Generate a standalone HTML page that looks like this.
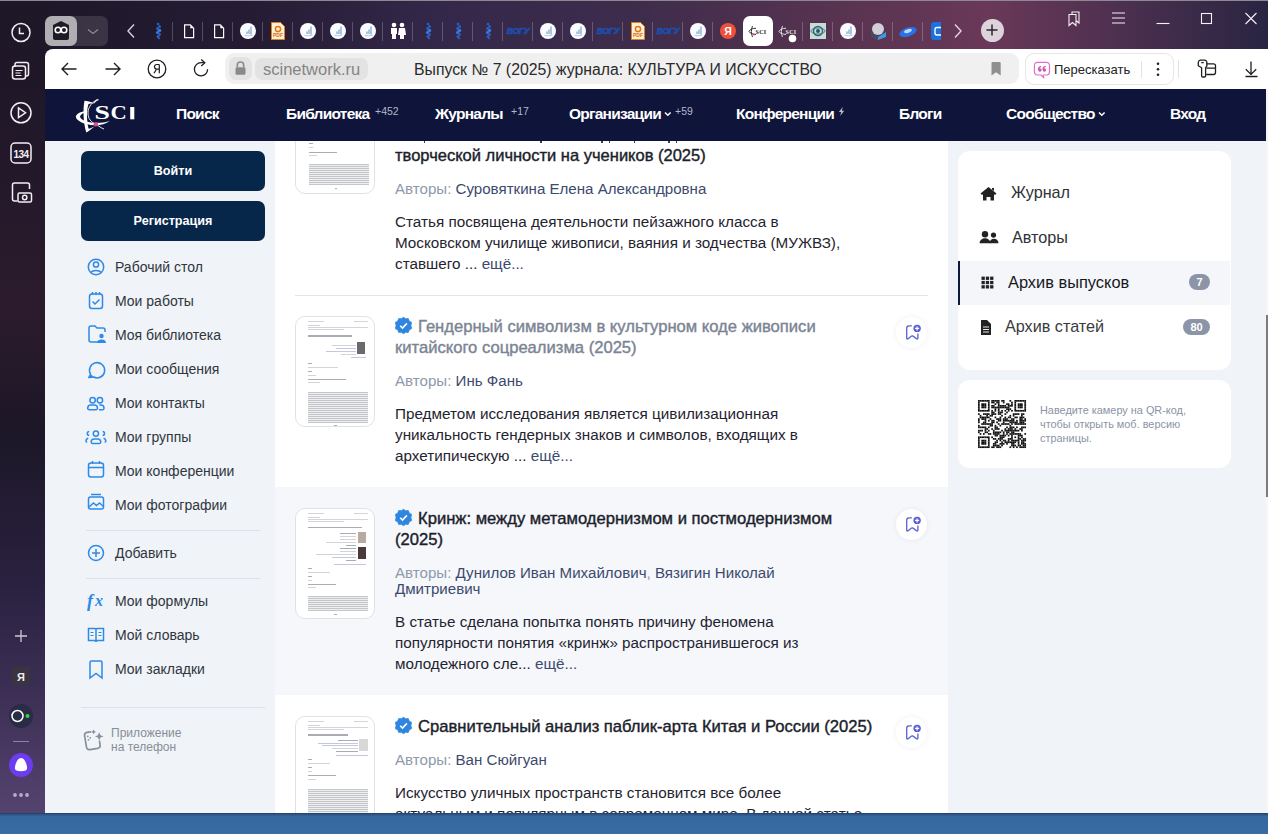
<!DOCTYPE html><html><head><meta charset="utf-8"><style>
*{box-sizing:border-box;margin:0;padding:0}
html,body{width:1268px;height:834px;overflow:hidden;font-family:"Liberation Sans",sans-serif;background:#1c1526}
.abs{position:absolute}
svg{position:absolute;overflow:visible}
#frame{position:absolute;left:0;top:0;width:1268px;height:813px;
 background:linear-gradient(90deg,#1c1727 0%,#251c34 20%,#34284a 35%,#3e2c4c 50%,#563350 65%,#6a3858 78%,#4e3050 88%,#282542 100%);}
#topline{position:absolute;left:0;top:0;width:1268px;height:1px;background:#8e8894}
#lside{position:absolute;left:0;top:0;width:45px;height:813px;
 background:linear-gradient(180deg,#1d1727 0%,#22182a 20%,#2c1b2c 38%,#1c1727 53%,#2a2140 72%,#3f3158 87%,#55436f 100%)}
#toolbar{position:absolute;left:45px;top:49px;width:1223px;height:40px;background:#fff;border-top-left-radius:8px}
#page{position:absolute;left:45px;top:89px;width:1223px;height:724px;background:#f0f3f7;overflow:hidden}
#nav{position:absolute;left:0;top:0;width:1223px;height:52px;background:#0e143a}
#taskbar{position:absolute;left:0;top:813px;width:1268px;height:21px;background:linear-gradient(180deg,#213d63 0,#2d5585 1.5px,#3668a0 3.5px,#3a6ba3 100%)}
.sep{position:absolute;top:22px;width:1px;height:19px;background:rgba(255,255,255,.22)}
.navi{position:absolute;top:0;height:52px;line-height:50px;color:#fff;font-weight:bold;font-size:15.5px;letter-spacing:-0.75px;white-space:nowrap}
.sup{position:absolute;color:#b4b8c8;font-size:10.5px;white-space:nowrap}
.btn{position:absolute;left:36px;width:184px;height:40px;border-radius:7px;background:#06264a;color:#fff;font-weight:bold;font-size:12.6px;text-align:center;line-height:40px}
.mi{position:absolute;left:70px;font-size:14px;color:#2f3640;white-space:nowrap;line-height:16px}
.div{position:absolute;height:1px;background:#dde1e7}
.t{position:absolute;white-space:nowrap}
</style></head><body>
<div id="frame"></div><div id="lside"></div><div id="topline"></div>
<svg style="left:0;top:0" width="45" height="813">
<g fill="none" stroke="#f2eef5" stroke-width="1.5">
<circle cx="21" cy="32.5" r="9"/><path d="M19.5 27.5v6h4.5"/>
<rect x="12.5" y="66" width="13" height="13" rx="2.5"/><path d="M15 67 v-2.5 a2 2 0 0 1 2-2 h9.5 a2 2 0 0 1 2 2 v9.5 a2 2 0 0 1 -2 2 h-1"/>
<path d="M15.5 70.5h7M15.5 73h5M15.5 75.5h6" stroke-width="1.2"/>
<circle cx="21" cy="112.8" r="10"/><path d="M18.5 108v9.5l7-4.75z"/>
<rect x="11" y="143" width="20" height="20" rx="4"/>
<path d="M12.5 189 v-4 a2 2 0 0 1 2-2 h13 a2 2 0 0 1 2 2 v4 M12.5 189 v10 a2 2 0 0 0 2 2 h3"/>
<rect x="18" y="193" width="13.5" height="9" rx="1.5"/><circle cx="24.7" cy="197.5" r="2.2"/>
<path d="M15 636h12M21 630v12" stroke-width="1.3" stroke="#cfc6d8"/>
<path d="M13 741.5h16" stroke="#8d7fa6" stroke-width="1"/>
</g>
<text x="21" y="157.5" fill="#f2eef5" font-family="Liberation Sans" font-weight="bold" font-size="10" letter-spacing="-0.5" text-anchor="middle">134</text>
<rect x="12" y="667" width="18" height="18" fill="#3a3440"/>
<text x="21" y="680.5" fill="#eee" font-family="Liberation Sans" font-weight="bold" font-size="11" text-anchor="middle">Я</text>
<circle cx="21" cy="716" r="12" fill="#2a2b45"/>
<circle cx="17.5" cy="716" r="5.5" fill="none" stroke="#fff" stroke-width="1.5"/>
<circle cx="27.5" cy="716" r="2" fill="#33d44a"/>
<circle cx="21" cy="765" r="12" fill="#6b3cf0"/>
<path d="M21 758 C17 758 14.5 766 15 769 C15.5 772 26.5 772 27 769 C27.5 766 25 758 21 758z" fill="#fff"/>
<circle cx="15" cy="795" r="1.9" fill="#b7a9cf"/><circle cx="21" cy="795" r="1.9" fill="#b7a9cf"/><circle cx="27" cy="795" r="1.9" fill="#b7a9cf"/>
</svg>
<div class="abs" style="left:45px;top:16px;width:63px;height:30px;border-radius:7px;background:rgba(255,255,255,.12)"></div>
<div class="abs" style="left:45px;top:16px;width:32px;height:30px;border-radius:7px;background:#b0adb3"></div>
<svg style="left:45px;top:16px" width="63" height="30">
<path d="M8 9 L16 5 L24 9 V22 a2 2 0 0 1 -2 2 H10 a2 2 0 0 1 -2-2z" fill="#1f1a28"/>
<circle cx="13" cy="14" r="2.8" fill="none" stroke="#fff" stroke-width="1.6"/><circle cx="19" cy="14" r="2.8" fill="none" stroke="#fff" stroke-width="1.6"/>
<path d="M43 13.5l5 4 5-4" fill="none" stroke="#8f8a99" stroke-width="1.3"/>
</svg>
<svg style="left:120px;top:16px" width="20" height="30"><path d="M14 8.5l-6 6.5 6 6.5" fill="none" stroke="#d8d2de" stroke-width="1.4"/></svg>

<svg style="left:154px;top:22px" width="10" height="18"><g fill="#2a5fc0"><circle cx="4" cy="2" r="1.3"/><circle cx="5.5" cy="4.5" r="1.5"/><circle cx="3.5" cy="6.5" r="1.4"/><circle cx="5.5" cy="8.5" r="1.8" fill="#3a78d8"/><circle cx="3.5" cy="10.5" r="1.6" fill="#3a78d8"/><circle cx="5.5" cy="12.5" r="1.4"/><circle cx="4" cy="14.5" r="1.5"/><circle cx="5" cy="16.3" r="1.1"/></g></svg>
<div class="sep" style="left:172px"></div>
<svg style="left:183.5px;top:24px" width="12" height="15"><path d="M0.6 0.9 H6.3 L9.6 4.2 V13.6 H0.6z" fill="none" stroke="#fff" stroke-width="1.2"/><path d="M6.3 0.9 V4.2 H9.6z" fill="#fff"/></svg>
<div class="sep" style="left:202px"></div>
<svg style="left:213.5px;top:24px" width="12" height="15"><path d="M0.6 0.9 H6.3 L9.6 4.2 V13.6 H0.6z" fill="none" stroke="#fff" stroke-width="1.2"/><path d="M6.3 0.9 V4.2 H9.6z" fill="#fff"/></svg>
<div class="sep" style="left:232px"></div>
<svg style="left:240px;top:23px" width="16" height="16"><circle cx="8" cy="8" r="8" fill="#fbfcff"/><path d="M7 11V8.5M9 11V6.5M11 11.5V3.5" stroke="#6f98cc" stroke-width="1.1"/><path d="M4.5 12.3 Q8.5 13.5 12.5 12" stroke="#aac2e0" fill="none" stroke-width="0.9"/></svg>
<div class="sep" style="left:262px"></div>
<svg style="left:271px;top:22px" width="14" height="18"><path d="M0.5 0.5H9.5L13.5 4.5V17.5H0.5z" fill="#fdf0d8" stroke="#e0821a"/><text x="7" y="15" font-size="5" fill="#e06a10" text-anchor="middle" font-family="Liberation Sans" font-weight="bold">PDF</text><circle cx="7" cy="7" r="2.6" fill="none" stroke="#e07a10" stroke-width="1.5"/></svg>
<div class="sep" style="left:292px"></div>
<svg style="left:300px;top:23px" width="16" height="16"><circle cx="8" cy="8" r="8" fill="#fbfcff"/><path d="M7 11V8.5M9 11V6.5M11 11.5V3.5" stroke="#6f98cc" stroke-width="1.1"/><path d="M4.5 12.3 Q8.5 13.5 12.5 12" stroke="#aac2e0" fill="none" stroke-width="0.9"/></svg>
<div class="sep" style="left:322px"></div>
<svg style="left:330px;top:23px" width="16" height="16"><circle cx="8" cy="8" r="8" fill="#fbfcff"/><path d="M7 11V8.5M9 11V6.5M11 11.5V3.5" stroke="#6f98cc" stroke-width="1.1"/><path d="M4.5 12.3 Q8.5 13.5 12.5 12" stroke="#aac2e0" fill="none" stroke-width="0.9"/></svg>
<div class="sep" style="left:352px"></div>
<svg style="left:360px;top:23px" width="16" height="16"><circle cx="8" cy="8" r="8" fill="#fbfcff"/><path d="M7 11V8.5M9 11V6.5M11 11.5V3.5" stroke="#6f98cc" stroke-width="1.1"/><path d="M4.5 12.3 Q8.5 13.5 12.5 12" stroke="#aac2e0" fill="none" stroke-width="0.9"/></svg>
<div class="sep" style="left:382px"></div>
<svg style="left:389px;top:22px" width="18" height="18"><circle cx="5" cy="3" r="2.3" fill="#fff"/><circle cx="13" cy="3" r="2.3" fill="#fff"/><path d="M2 6h6v6H7v5H3v-5H2z M10 6h6l1 7h-2v4h-4v-4H9z" fill="#fff"/></svg>
<div class="sep" style="left:412px"></div>
<svg style="left:424px;top:22px" width="10" height="18"><g fill="#2a5fc0"><circle cx="4" cy="2" r="1.3"/><circle cx="5.5" cy="4.5" r="1.5"/><circle cx="3.5" cy="6.5" r="1.4"/><circle cx="5.5" cy="8.5" r="1.8" fill="#3a78d8"/><circle cx="3.5" cy="10.5" r="1.6" fill="#3a78d8"/><circle cx="5.5" cy="12.5" r="1.4"/><circle cx="4" cy="14.5" r="1.5"/><circle cx="5" cy="16.3" r="1.1"/></g></svg>
<div class="sep" style="left:442px"></div>
<svg style="left:454px;top:22px" width="10" height="18"><g fill="#2a5fc0"><circle cx="4" cy="2" r="1.3"/><circle cx="5.5" cy="4.5" r="1.5"/><circle cx="3.5" cy="6.5" r="1.4"/><circle cx="5.5" cy="8.5" r="1.8" fill="#3a78d8"/><circle cx="3.5" cy="10.5" r="1.6" fill="#3a78d8"/><circle cx="5.5" cy="12.5" r="1.4"/><circle cx="4" cy="14.5" r="1.5"/><circle cx="5" cy="16.3" r="1.1"/></g></svg>
<div class="sep" style="left:472px"></div>
<svg style="left:484px;top:22px" width="10" height="18"><g fill="#2a5fc0"><circle cx="4" cy="2" r="1.3"/><circle cx="5.5" cy="4.5" r="1.5"/><circle cx="3.5" cy="6.5" r="1.4"/><circle cx="5.5" cy="8.5" r="1.8" fill="#3a78d8"/><circle cx="3.5" cy="10.5" r="1.6" fill="#3a78d8"/><circle cx="5.5" cy="12.5" r="1.4"/><circle cx="4" cy="14.5" r="1.5"/><circle cx="5" cy="16.3" r="1.1"/></g></svg>
<div class="sep" style="left:502px"></div>
<svg style="left:507px;top:26px" width="22" height="10"><text x="11" y="7.6" font-size="8.6" fill="#1c4fae" stroke="#1c4fae" stroke-width="0.6" text-anchor="middle" font-family="Liberation Sans" font-weight="bold" font-style="italic" letter-spacing="-0.3">ВОГУ</text></svg>
<div class="sep" style="left:532px"></div>
<svg style="left:540px;top:23px" width="16" height="16"><circle cx="8" cy="8" r="8" fill="#fbfcff"/><path d="M7 11V8.5M9 11V6.5M11 11.5V3.5" stroke="#6f98cc" stroke-width="1.1"/><path d="M4.5 12.3 Q8.5 13.5 12.5 12" stroke="#aac2e0" fill="none" stroke-width="0.9"/></svg>
<div class="sep" style="left:562px"></div>
<svg style="left:570px;top:23px" width="16" height="16"><circle cx="8" cy="8" r="8" fill="#fbfcff"/><path d="M7 11V8.5M9 11V6.5M11 11.5V3.5" stroke="#6f98cc" stroke-width="1.1"/><path d="M4.5 12.3 Q8.5 13.5 12.5 12" stroke="#aac2e0" fill="none" stroke-width="0.9"/></svg>
<div class="sep" style="left:592px"></div>
<svg style="left:597px;top:26px" width="22" height="10"><text x="11" y="7.6" font-size="8.6" fill="#1c4fae" stroke="#1c4fae" stroke-width="0.6" text-anchor="middle" font-family="Liberation Sans" font-weight="bold" font-style="italic" letter-spacing="-0.3">ВОГУ</text></svg>
<div class="sep" style="left:622px"></div>
<svg style="left:631px;top:22px" width="14" height="18"><path d="M0.5 0.5H9.5L13.5 4.5V17.5H0.5z" fill="#fdf0d8" stroke="#e0821a"/><text x="7" y="15" font-size="5" fill="#e06a10" text-anchor="middle" font-family="Liberation Sans" font-weight="bold">PDF</text><circle cx="7" cy="7" r="2.6" fill="none" stroke="#e07a10" stroke-width="1.5"/></svg>
<div class="sep" style="left:652px"></div>
<svg style="left:657px;top:26px" width="22" height="10"><text x="11" y="7.6" font-size="8.6" fill="#1c4fae" stroke="#1c4fae" stroke-width="0.6" text-anchor="middle" font-family="Liberation Sans" font-weight="bold" font-style="italic" letter-spacing="-0.3">ВОГУ</text></svg>
<div class="sep" style="left:682px"></div>
<svg style="left:690px;top:23px" width="16" height="16"><circle cx="8" cy="8" r="8" fill="#fbfcff"/><path d="M7 11V8.5M9 11V6.5M11 11.5V3.5" stroke="#6f98cc" stroke-width="1.1"/><path d="M4.5 12.3 Q8.5 13.5 12.5 12" stroke="#aac2e0" fill="none" stroke-width="0.9"/></svg>
<div class="sep" style="left:712px"></div>
<svg style="left:720px;top:23px" width="16" height="16"><circle cx="8" cy="8" r="8" fill="#f0503a"/><text x="8" y="12" font-size="10.5" fill="#fff" text-anchor="middle" font-family="Liberation Sans" font-weight="bold">Я</text></svg>
<div class="abs" style="left:743px;top:16px;width:30px;height:30px;border-radius:7px;background:#fff"></div><svg style="left:748px;top:24px" width="20" height="14"><path d="M1 7.5 C2 5, 5 4.3, 8 4.3 M1 7.5 C2 9.5, 5 10.3, 8 10.5 M4.5 2 C3 5, 3 10, 4.5 13" fill="none" stroke="#333" stroke-width="1"/><circle cx="6" cy="10.5" r="0.9" fill="#d04080"/><text x="13" y="9.5" font-size="6" fill="#222" text-anchor="middle" font-family="Liberation Serif" font-weight="bold" letter-spacing="0.3">SCI</text></svg>
<svg style="left:778px;top:24px" width="20" height="18"><path d="M1 7.5 C2 5, 5 4.3, 8 4.3 M1 7.5 C2 9.5, 5 10.3, 8 10.5 M4.5 2 C3 5, 3 10, 4.5 13" fill="none" stroke="#ddd" stroke-width="1"/><text x="13" y="9.5" font-size="6" fill="#e8e8e8" text-anchor="middle" font-family="Liberation Serif" font-weight="bold" letter-spacing="0.3">SCI</text><circle cx="14.5" cy="14.5" r="3.8" fill="#fff"/></svg>
<div class="sep" style="left:802px"></div>
<svg style="left:810px;top:23px" width="16" height="16"><rect x="0" y="0" width="16" height="16" fill="#c8dcd8"/><circle cx="8" cy="8" r="4.5" fill="none" stroke="#2a6a70" stroke-width="1.5"/><circle cx="8" cy="8" r="2" fill="#2a5a60"/><ellipse cx="8" cy="8" rx="7" ry="3" fill="none" stroke="#406a80" stroke-width=".8"/></svg>
<div class="sep" style="left:832px"></div>
<svg style="left:840px;top:23px" width="16" height="16"><circle cx="8" cy="8" r="8" fill="#fbfcff"/><path d="M7 11V8.5M9 11V6.5M11 11.5V3.5" stroke="#6f98cc" stroke-width="1.1"/><path d="M4.5 12.3 Q8.5 13.5 12.5 12" stroke="#aac2e0" fill="none" stroke-width="0.9"/></svg>
<div class="sep" style="left:862px"></div>
<svg style="left:869px;top:22px" width="18" height="18"><circle cx="9" cy="7" r="6" fill="#d0d0d8"/><path d="M2 10 L9 15 L17 10 L17 15 L9 18 L2 14z" fill="#3a9ae0"/><path d="M2 10 L9 15 L9 18 L2 14z" fill="#444a55"/></svg>
<div class="sep" style="left:892px"></div>
<svg style="left:899px;top:24px" width="18" height="14"><ellipse cx="9" cy="8" rx="9" ry="4.5" transform="rotate(-18 9 8)" fill="#2a70e8"/><ellipse cx="9" cy="7" rx="4" ry="1.8" transform="rotate(-18 9 7)" fill="#bcd8ff"/></svg>
<div class="sep" style="left:922px"></div>
<div class="abs" style="left:931px;top:22px;width:10px;height:18px;overflow:hidden"><svg style="left:0;top:0;overflow:hidden" width="10" height="18"><rect x="0" y="0" width="14" height="18" rx="3" fill="#1a72e0"/><path d="M10 5.5 H6 a2 2 0 0 0 -2 2 V11 a2 2 0 0 0 2 2 H10" fill="none" stroke="#fff" stroke-width="1.4"/></svg></div>
<svg style="left:950px;top:16px" width="20" height="30"><path d="M5 8.5l6 6.5-6 6.5" fill="none" stroke="#e0d8e0" stroke-width="1.4"/></svg>
<div class="abs" style="left:980.5px;top:18.5px;width:23px;height:23px;border-radius:50%;background:#ddd3da"></div>
<svg style="left:980px;top:18px" width="24" height="24"><path d="M12 6.5v11M6.5 12h11" stroke="#2d2430" stroke-width="1.5"/></svg>
<svg style="left:1060px;top:5px" width="208" height="30" >
<g fill="none" stroke="#f4f0f4" stroke-width="1.1">
<path d="M9 9.5 h7 v11 l-3.5-3 -3.5 3z M12 9.5 v-2.5 h7 v11 l-3 -2.5"/>
<path d="M52 8h13M52 13h13M52 18h13"/>
<path d="M96.5 18.5h13"/>
<rect x="141.5" y="8.5" width="10" height="10"/>
<path d="M185.5 8 l11 11 M196.5 8 l-11 11"/>
</g></svg>

<div id="toolbar"></div>
<svg style="left:0;top:49px" width="1268" height="40">
<g fill="none" stroke="#1f1f1f" stroke-width="1.4">
<path d="M76.5 20h-14.5M68 14l-6 6 6 6"/>
<path d="M105.5 20h14.5M114 14l6 6-6 6"/>
<circle cx="157" cy="20" r="8.8" stroke-width="1.3"/>
<path d="M207.6 20.3 A6.6 6.6 0 1 1 201 13.7 H203.8" stroke-width="1.3"/><path d="M201.3 10.6 L204.8 13.8 L201.3 17" stroke-width="1.3"/>
</g>
<path d="M159.3 15.5 V24.3 M159.3 15.5 H156.8 a2.3 2.3 0 0 0 0 4.6 H159.3 M156.5 20.1 L154 24.3" fill="none" stroke="#1f1f1f" stroke-width="1.2"/>
</svg>
<div class="abs" style="left:225px;top:53px;width:794px;height:31px;border-radius:9px;background:#f0f0f0"></div>
<div class="abs" style="left:229px;top:57px;width:23px;height:23px;border-radius:7px;background:#e3e3e3"></div>
<svg style="left:229px;top:57px" width="23" height="23"><path d="M8.3 10.5v-2.3a3.2 3.2 0 0 1 6.4 0v2.3" fill="none" stroke="#8a8a8a" stroke-width="1.6"/><rect x="6.5" y="10.3" width="10" height="7.5" rx="1.5" fill="#8a8a8a"/></svg>
<div class="abs" style="left:255px;top:58px;width:113px;height:22px;border-radius:7px;background:#e3e3e3"></div>
<div class="t" style="left:263px;top:59px;font-size:16.5px;line-height:20px;color:#858585">scinetwork.ru</div>
<div class="t" id="ttl" style="left:414px;top:59.5px;font-size:15.8px;line-height:20px;color:#2a2a2a">Выпуск № 7 (2025) журнала: КУЛЬТУРА И ИСКУССТВО</div>
<svg style="left:988px;top:60px" width="16" height="18"><path d="M4.7 2 h6.8 a1.2 1.2 0 0 1 1.2 1.2 V15.6 l-4.6-3.4 -4.6 3.4 V3.2 a1.2 1.2 0 0 1 1.2-1.2z" fill="#8f8f8f"/></svg>
<div class="abs" style="left:1025px;top:53px;width:149px;height:32px;border-radius:9px;background:#fff;border:1px solid #e6e6e6"></div>
<svg style="left:1033px;top:60px" width="18" height="20"><path d="M4.4 2.3 H13.5 a3 3 0 0 1 3 3 V12 a3 3 0 0 1 -3 3 H10.8 L10.2 15 L10.8 17.8 L8 15 H4.4 a3 3 0 0 1 -3-3 V5.3 a3 3 0 0 1 3-3z" fill="none" stroke="#e070c8" stroke-width="1.2" stroke-linejoin="round"/>
<g fill="#d050b8"><circle cx="6.9" cy="10" r="1.7"/><circle cx="11.4" cy="10" r="1.7"/></g>
<path d="M5.4 9.6 Q5.6 6.7 8.2 6.3 M9.9 9.6 Q10.1 6.7 12.7 6.3" fill="none" stroke="#d050b8" stroke-width="1.3"/></svg>
<div class="t" style="left:1054px;top:60.5px;font-size:13px;line-height:18px;color:#222">Пересказать</div>
<div class="abs" style="left:1141px;top:61px;width:1px;height:17px;background:#e2e2e2"></div>
<svg style="left:1150px;top:58px" width="16" height="22"><circle cx="8" cy="5.8" r="1.3" fill="#222"/><circle cx="8" cy="11.3" r="1.3" fill="#222"/><circle cx="8" cy="16.8" r="1.3" fill="#222"/></svg>
<div class="abs" style="left:1178px;top:60px;width:1px;height:18px;background:#e2e2e2"></div>
<svg style="left:1196px;top:58px" width="24" height="24"><g fill="none" stroke="#1f1f1f" stroke-width="1.3" stroke-linejoin="round"><path d="M2.3 4.5 a2.3 2.3 0 0 1 2.3-2.3 h4 a2.3 2.3 0 0 1 2.3 2.3 v3.3 l-1.3 2 V17.8 a1.2 1.2 0 0 1 -1.2 1.2 h-1.6 a1.2 1.2 0 0 1 -1.2-1.2 V9.8 L2.3 7.8z"/><path d="M10.3 5.8 h7.2 a2 2 0 0 1 2 2 v6.7 a2 2 0 0 1 -2 2 h-7.2 M10.3 10.2 h9.2"/><path d="M5.3 4.6 h2.4"/></g></svg>
<svg style="left:1240px;top:58px" width="22" height="24"><g fill="none" stroke="#1f1f1f" stroke-width="1.3"><path d="M11 3.5v13.5M5.8 11.2L11 16.4l5.2-5.2M5.5 18.5h12"/></g></svg>

<div id="page">
<div id="nav">
<svg style="left:31px;top:9px" width="62" height="38"><g transform="translate(-76 -98)">
<path d="M75.8 116.6 C77 112.5, 83 111, 88 111.3 C84 112.5, 80.5 114.5, 80 116.8 C80.5 119.5, 86 122, 94 123 C100 123.2, 106 122.5, 110 120.8 C106 124, 100 125.5, 94 125.3 C85 125, 76 121, 75.8 116.6 Z" fill="#fff"/>
<path d="M84.5 100.8 C83 108, 83 122, 86.3 132.6 C89 131, 92 128.5, 94.5 126.5 C91.5 128, 89 129, 88.5 128.5 C86.5 121, 86.5 110, 88.5 104 C90 103.5, 92 103.5, 94 103.2 C91 102, 87 101, 84.5 100.8 Z" fill="#fff"/>
<g fill="none" stroke="#e6e6ee">
<path d="M97.7 99.3 C92 102, 88 107, 88 113 C88 119, 91 122, 95.9 124.3 C99 126, 101 128, 104 129" stroke-width="1"/>
<path d="M93.6 103 C95 101.5, 97 100, 98.5 99.5" stroke-width="1.3"/>
</g>
<circle cx="95.9" cy="124.3" r="2.2" fill="#e04a8e"/>
<text font-family="Liberation Serif" font-weight="bold" font-size="18.5" fill="#fff" transform="translate(95.1 119.3) scale(1.5 1)" x="-0.4" y="0">S</text>
<text font-family="Liberation Serif" font-weight="bold" font-size="18.5" fill="#fff" transform="translate(111.1 119.3) scale(1.22 1)" x="-0.5" y="0">C</text>
<rect x="130.2" y="107" width="4.1" height="12.3" fill="#fff"/>
</g></svg>
<div class="navi" style="left:131px">Поиск</div>
<div class="navi" style="left:241px">Библиотека</div>
<div class="sup" style="left:330px;top:16px">+452</div>
<div class="navi" style="left:390px">Журналы</div>
<div class="sup" style="left:466px;top:16px">+17</div>
<div class="navi" style="left:524px">Организации</div>
<div class="sup" style="left:630px;top:16px">+59</div>
<div class="navi" style="left:691px">Конференции</div>
<div class="navi" style="left:854px">Блоги</div>
<div class="navi" style="left:961px">Сообщество</div>
<div class="navi" style="left:1125px">Вход</div>
<svg style="left:619px;top:22px" width="8" height="6"><path d="M1 1.5l2.8 2.8 2.8-2.8" fill="none" stroke="#fff" stroke-width="1.5"/></svg>
<svg style="left:1053px;top:22px" width="8" height="6"><path d="M1 1.5l2.8 2.8 2.8-2.8" fill="none" stroke="#fff" stroke-width="1.5"/></svg>
<svg style="left:793px;top:18px" width="7" height="9"><path d="M4.8 0 L0.8 5 H3.2 L2.2 9 L6.2 3.8 H3.8 L4.8 0z" fill="#b8bcc8"/></svg>
</div>
<div class="abs" style="left:0;top:52px;width:230px;height:672px;background:#f0f3f7"></div>
<div class="btn" style="top:62px">Войти</div>
<div class="btn" style="top:112px">Регистрация</div>
<div class="mi" style="top:170px">Рабочий стол</div>
<div class="mi" style="top:204px">Мои работы</div>
<div class="mi" style="top:238px">Моя библиотека</div>
<div class="mi" style="top:272px">Мои сообщения</div>
<div class="mi" style="top:306px">Мои контакты</div>
<div class="mi" style="top:340px">Мои группы</div>
<div class="mi" style="top:374px">Мои конференции</div>
<div class="mi" style="top:408px">Мои фотографии</div>
<div class="div" style="left:41px;width:174px;top:441px"></div>
<div class="mi" style="top:456px">Добавить</div>
<div class="div" style="left:41px;width:174px;top:489px"></div>
<div class="mi" style="top:504px">Мои формулы</div>
<div class="mi" style="top:538px">Мой словарь</div>
<div class="mi" style="top:572px">Мои закладки</div>
<div class="div" style="left:36px;width:184px;top:618px"></div>
<div class="t" style="left:66px;top:638.3px;font-size:12px;line-height:13.5px;color:#878e98">Приложение<br>на телефон</div>
<svg style="left:0;top:0" width="230" height="724"><g fill="none" stroke="#2d8ae8" stroke-width="1.5">
<circle cx="51" cy="178" r="7.7"/><circle cx="51" cy="175.5" r="2.6"/><path d="M45.5 183.5 a7 5 0 0 1 11 0"/>
<rect x="44.5" y="205" width="13" height="14.5" rx="2.5"/><path d="M47.5 203v3M51 203v3M54.5 203v3M47.5 212.5l2.5 2.5 4.5-4.5"/>
<path d="M55 253 H46 a2 2 0 0 1-2-2 V239 a2 2 0 0 1 2-2 h4 l2 2 h6 a2 2 0 0 1 2 2 v2"/>
<path d="M45.6 285.2 A7.6 7.6 0 1 1 48.6 288 L43.8 288.6 Z" stroke-linejoin="round"/>
<circle cx="47.6" cy="311.3" r="2.7"/><circle cx="54.9" cy="311.3" r="2.7"/><path d="M44.3 320.8 h6.6 a1.6 1.6 0 0 0 1.6-1.6 a3.2 3.2 0 0 0 -3.2-3.2 h-3.4 a3.2 3.2 0 0 0 -3.2 3.2 a1.6 1.6 0 0 0 1.6 1.6z M54.3 316 h1.5 a3.2 3.2 0 0 1 3.2 3.2 a1.6 1.6 0 0 1 -1.6 1.6 h-3.4"/>
<circle cx="50.9" cy="344.6" r="2.6"/><path d="M47.8 354.6 h6.4 a1.6 1.6 0 0 0 1.6-1.6 a3 3 0 0 0 -3-3 h-3.6 a3 3 0 0 0 -3 3 a1.6 1.6 0 0 0 1.6 1.6z M44.2 342.6 a1.9 1.9 0 0 0 0 3.8 M57.6 342.6 a1.9 1.9 0 0 1 0 3.8 M43.2 349.2 a2.8 2.8 0 0 0 -2.2 2.7 a1.2 1.2 0 0 0 1.2 1.2 M58.6 349.2 a2.8 2.8 0 0 1 2.2 2.7 a1.2 1.2 0 0 1 -1.2 1.2"/>
<rect x="43.5" y="374" width="15" height="14" rx="2.5"/><path d="M43.5 378.5h15M47.5 372v3M54.5 372v3"/>
<rect x="43.5" y="408" width="15" height="12" rx="2"/><path d="M46 405.5h10"/><path d="M44 418 l4.5-4 3 2.5 3-2.5 4 3.5"/>
<circle cx="51" cy="464" r="7.5"/><path d="M51 460v8M47 464h8"/>
<path d="M43.5 539.5 H50 a1 1 0 0 1 1 1 V553 a1.5 1.5 0 0 0 -1.5-1.5 H43.5z M58.5 539.5 H52 a1 1 0 0 0 -1 1 V553 a1.5 1.5 0 0 1 1.5-1.5 H58.5z"/><path d="M45.5 543.5h3M45.5 546.5h3M53.5 543.5h3M53.5 546.5h3" stroke-width="1.2"/>
<path d="M45 573.5 a1.5 1.5 0 0 1 1.5-1.5 h9 a1.5 1.5 0 0 1 1.5 1.5 V589 l-6-4.5 -6 4.5z"/>
</g>
<path d="M44 242 a1.5 1.5 0 0 1 0 0" fill="#2d8ae8"/>
<circle cx="56.5" cy="247" r="2.2" fill="#2d8ae8"/><path d="M52 254 a4.5 3.5 0 0 1 9 0z" fill="#2d8ae8"/>
<path d="M46 285.5 l-2 3 l4.5-1" fill="#2d8ae8"/>
<text x="42" y="518" font-family="Liberation Serif" font-style="italic" font-weight="bold" font-size="18" fill="#2d8ae8">f</text>
<text x="50" y="517" font-family="Liberation Serif" font-style="italic" font-weight="bold" font-size="16" fill="#2d8ae8">x</text>
<path d="M45.5 642.8 L42 643.4 a3 3 0 0 0 -2.4 3.4 l1.9 11.4 a3 3 0 0 0 3.4 2.4 l7.8-1.3 a3 3 0 0 0 2.4-3.4 l-0.6-3.6" fill="none" stroke="#8a9099" stroke-width="1.7" stroke-linecap="round"/>
<circle cx="42.8" cy="647.3" r="0.9" fill="#8a9099"/><circle cx="45.3" cy="648.8" r="0.9" fill="#8a9099"/><circle cx="43.5" cy="650.8" r="0.9" fill="#8a9099"/>
<path d="M54.2 643.2 l1.3 3 3 1.2 -3 1.2 -1.3 3 -1.3-3 -3-1.2 3-1.2z M48.6 640.5 l.8 1.6 1.6.8-1.6.8-.8 1.6-.8-1.6-1.6-.8 1.6-.8z" fill="#8a9099"/>
</svg>
<div class="abs" style="left:230px;top:52px;width:673px;height:672px;background:#fff"></div>
<div class="abs" style="left:230px;top:398px;width:673px;height:208px;background:#f5f7fb"></div>
<div class="div" style="left:250px;width:633px;top:206px;background:#e1e4ea"></div>
<div class="abs" style="left:250px;top:52px;width:80px;height:54px;overflow:hidden"><div class="abs" style="left:0px;top:-21px;width:80px;height:74px;border:1px solid #dfe2e6;border-radius:10px;background:#fff;overflow:hidden"><div class="abs" style="left:13px;top:22px;width:4px;height:1px;background:#a9acb2"></div><div class="abs" style="left:13px;top:26px;width:4px;height:1px;background:#d2d4d8"></div><div class="abs" style="left:13px;top:31px;width:28px;height:1px;background:#a9acb2"></div><div class="abs" style="left:13px;top:34px;width:8px;height:1px;background:#d2d4d8"></div><div class="abs" style="left:13px;top:43px;width:60px;height:21px;background:repeating-linear-gradient(180deg,#c4c6ca 0 1px,#eceef0 1px 2px)"></div><div class="abs" style="left:39px;top:67px;width:2px;height:1px;background:#a9acb2"></div></div></div>
<div class="abs" style="left:250px;top:227px;width:80px;height:111px;border:1px solid #dfe2e6;border-radius:10px;background:#fff;overflow:hidden"><div class="abs" style="left:12px;top:4px;width:16px;height:1px;background:#d2d4d8"></div><div class="abs" style="left:58px;top:4px;width:14px;height:1px;background:#d2d4d8"></div><div class="abs" style="left:12px;top:8px;width:12px;height:1px;background:#d2d4d8"></div><div class="abs" style="left:12px;top:10px;width:60px;height:1px;background:#d2d4d8"></div><div class="abs" style="left:12px;top:12px;width:36px;height:1px;background:#d2d4d8"></div><div class="abs" style="left:12px;top:18px;width:44px;height:2px;background:#a9acb2"></div><div class="abs" style="left:36px;top:28px;width:24px;height:1px;background:#d2d4d8"></div><div class="abs" style="left:40px;top:31px;width:20px;height:1px;background:#c3c8e0"></div><div class="abs" style="left:30px;top:34px;width:30px;height:1px;background:#c3c8e0"></div><div class="abs" style="left:45px;top:37px;width:15px;height:1px;background:#d2d4d8"></div><div class="abs" style="left:61px;top:25px;width:8px;height:12px;background:#6a6a6a"></div><div class="abs" style="left:55px;top:40px;width:15px;height:1px;background:#c3c8e0"></div><div class="abs" style="left:12px;top:46px;width:4px;height:1px;background:#a9acb2"></div><div class="abs" style="left:12px;top:50px;width:30px;height:1px;background:#d2d4d8"></div><div class="abs" style="left:12px;top:54px;width:4px;height:1px;background:#a9acb2"></div><div class="abs" style="left:12px;top:58px;width:8px;height:1px;background:#d2d4d8"></div><div class="abs" style="left:12px;top:62px;width:38px;height:1px;background:#a9acb2"></div><div class="abs" style="left:12px;top:65px;width:12px;height:1px;background:#d2d4d8"></div><div class="abs" style="left:12px;top:75px;width:60px;height:31px;background:repeating-linear-gradient(180deg,#c4c6ca 0 1px,#eceef0 1px 2px)"></div><div class="abs" style="left:38px;top:108px;width:3px;height:1px;background:#a9acb2"></div></div>
<div class="abs" style="left:250px;top:419px;width:80px;height:111px;border:1px solid #dfe2e6;border-radius:10px;background:#fff;overflow:hidden"><div class="abs" style="left:12px;top:4px;width:16px;height:1px;background:#d2d4d8"></div><div class="abs" style="left:58px;top:4px;width:14px;height:1px;background:#d2d4d8"></div><div class="abs" style="left:12px;top:8px;width:12px;height:1px;background:#d2d4d8"></div><div class="abs" style="left:12px;top:10px;width:60px;height:1px;background:#d2d4d8"></div><div class="abs" style="left:12px;top:12px;width:36px;height:1px;background:#d2d4d8"></div><div class="abs" style="left:12px;top:18px;width:54px;height:1px;background:#a9acb2"></div><div class="abs" style="left:44px;top:24px;width:16px;height:1px;background:#a9acb2"></div><div class="abs" style="left:44px;top:27px;width:16px;height:1px;background:#d2d4d8"></div><div class="abs" style="left:44px;top:30px;width:16px;height:1px;background:#d2d4d8"></div><div class="abs" style="left:30px;top:33px;width:30px;height:1px;background:#d2d4d8"></div><div class="abs" style="left:50px;top:36px;width:10px;height:1px;background:#a9acb2"></div><div class="abs" style="left:62px;top:23px;width:8px;height:11px;background:#b8aaa0"></div><div class="abs" style="left:44px;top:39px;width:16px;height:1px;background:#a9acb2"></div><div class="abs" style="left:44px;top:42px;width:16px;height:1px;background:#d2d4d8"></div><div class="abs" style="left:20px;top:45px;width:40px;height:1px;background:#d2d4d8"></div><div class="abs" style="left:36px;top:48px;width:24px;height:1px;background:#c3c8e0"></div><div class="abs" style="left:50px;top:51px;width:10px;height:1px;background:#a9acb2"></div><div class="abs" style="left:62px;top:38px;width:8px;height:12px;background:#4a3a38"></div><div class="abs" style="left:38px;top:55px;width:32px;height:1px;background:#c3c8e0"></div><div class="abs" style="left:12px;top:59px;width:4px;height:1px;background:#a9acb2"></div><div class="abs" style="left:12px;top:63px;width:22px;height:1px;background:#d2d4d8"></div><div class="abs" style="left:12px;top:67px;width:4px;height:1px;background:#a9acb2"></div><div class="abs" style="left:12px;top:71px;width:4px;height:1px;background:#d2d4d8"></div><div class="abs" style="left:12px;top:75px;width:28px;height:1px;background:#a9acb2"></div><div class="abs" style="left:12px;top:78px;width:8px;height:1px;background:#d2d4d8"></div><div class="abs" style="left:12px;top:87px;width:60px;height:15px;background:repeating-linear-gradient(180deg,#c4c6ca 0 1px,#eceef0 1px 2px)"></div><div class="abs" style="left:38px;top:105px;width:3px;height:1px;background:#a9acb2"></div></div>
<div class="abs" style="left:250px;top:627px;width:80px;height:111px;border:1px solid #dfe2e6;border-radius:10px;background:#fff;overflow:hidden"><div class="abs" style="left:12px;top:4px;width:16px;height:1px;background:#d2d4d8"></div><div class="abs" style="left:58px;top:4px;width:14px;height:1px;background:#d2d4d8"></div><div class="abs" style="left:12px;top:8px;width:12px;height:1px;background:#d2d4d8"></div><div class="abs" style="left:12px;top:10px;width:60px;height:1px;background:#d2d4d8"></div><div class="abs" style="left:12px;top:12px;width:36px;height:1px;background:#d2d4d8"></div><div class="abs" style="left:12px;top:17px;width:40px;height:2px;background:#a9acb2"></div><div class="abs" style="left:42px;top:23px;width:20px;height:1px;background:#a9acb2"></div><div class="abs" style="left:22px;top:26px;width:40px;height:1px;background:#c3c8e0"></div><div class="abs" style="left:26px;top:28px;width:36px;height:1px;background:#c3c8e0"></div><div class="abs" style="left:36px;top:31px;width:26px;height:1px;background:#d2d4d8"></div><div class="abs" style="left:40px;top:34px;width:22px;height:1px;background:#a9acb2"></div><div class="abs" style="left:63px;top:22px;width:9px;height:12px;background:#d8d8d8"></div><div class="abs" style="left:40px;top:38px;width:32px;height:1px;background:#c3c8e0"></div><div class="abs" style="left:12px;top:42px;width:4px;height:1px;background:#a9acb2"></div><div class="abs" style="left:12px;top:46px;width:22px;height:1px;background:#d2d4d8"></div><div class="abs" style="left:12px;top:50px;width:4px;height:1px;background:#a9acb2"></div><div class="abs" style="left:12px;top:54px;width:4px;height:1px;background:#d2d4d8"></div><div class="abs" style="left:12px;top:58px;width:28px;height:1px;background:#a9acb2"></div><div class="abs" style="left:12px;top:62px;width:8px;height:1px;background:#d2d4d8"></div><div class="abs" style="left:12px;top:72px;width:60px;height:40px;background:repeating-linear-gradient(180deg,#c4c6ca 0 1px,#eceef0 1px 2px)"></div></div>
<div class="abs" style="left:378.5px;top:52px;width:1.5px;height:1.6px;background:#3a3d4a"></div>
<div class="abs" style="left:495.2px;top:52px;width:1.5px;height:1.6px;background:#3a3d4a"></div>
<div class="abs" style="left:556.3px;top:52px;width:1.5px;height:1.6px;background:#3a3d4a"></div>
<div class="abs" style="left:563.5px;top:52px;width:1.5px;height:1.6px;background:#3a3d4a"></div>
<div class="abs" style="left:588.5px;top:52px;width:1.5px;height:1.6px;background:#3a3d4a"></div>
<div class="abs" style="left:623.3px;top:52px;width:1.5px;height:1.6px;background:#3a3d4a"></div>
<div class="abs" style="left:630.5px;top:52px;width:1.5px;height:1.6px;background:#3a3d4a"></div>
<div class="t" style="left:350px;top:56px;font-size:16.5px;line-height:21px;color:#1b1e2b;font-weight:normal;-webkit-text-stroke:0.4px #1b1e2b">творческой личности на учеников (2025)</div>
<div class="t" style="left:350px;top:92px;font-size:15.1px;line-height:16px;color:#3c4a6e;font-weight:normal;"><span style="color:#8e99ab">Авторы:</span> Суровяткина Елена Александровна</div>
<div class="t" style="left:350px;top:122px;font-size:15.25px;line-height:21px;color:#1f2430;font-weight:normal;">Статья посвящена деятельности пейзажного класса в</div>
<div class="t" style="left:350px;top:143px;font-size:15.25px;line-height:21px;color:#1f2430;font-weight:normal;">Московском училище живописи, ваяния и зодчества (МУЖВЗ),</div>
<div class="t" style="left:350px;top:164px;font-size:15.25px;line-height:21px;color:#1f2430;font-weight:normal;">ставшего ... <span style="color:#3c4a6e">ещё...</span></div>
<svg style="left:350.3px;top:227.8px" width="17" height="17"><path d="M8.5 0.3 L10.7 1.8 L13.3 1.6 L14.2 4.1 L16.6 5.4 L15.9 8.5 L16.6 11.6 L14.2 12.9 L13.3 15.4 L10.7 15.2 L8.5 16.7 L6.3 15.2 L3.7 15.4 L2.8 12.9 L0.4 11.6 L1.1 8.5 L0.4 5.4 L2.8 4.1 L3.7 1.6 L6.3 1.8z" fill="#2f86e0" stroke="#2f86e0" stroke-width="0.8" stroke-linejoin="round"/><path d="M5.2 8.7 l2.3 2.3 4.4-4.6" fill="none" stroke="#fff" stroke-width="1.6"/></svg>
<div class="t" style="left:373px;top:227px;font-size:16.6px;line-height:21px;color:#7b8494;font-weight:normal;-webkit-text-stroke:0.4px #7b8494">Гендерный символизм в культурном коде живописи</div>
<div class="t" style="left:350px;top:248px;font-size:16.6px;line-height:21px;color:#7b8494;font-weight:normal;-webkit-text-stroke:0.4px #7b8494">китайского соцреализма (2025)</div>
<div class="t" style="left:350px;top:284px;font-size:15.1px;line-height:16px;color:#3c4a6e;font-weight:normal;"><span style="color:#8e99ab">Авторы:</span> Инь Фань</div>
<div class="t" style="left:350px;top:314px;font-size:15.25px;line-height:21px;color:#1f2430;font-weight:normal;">Предметом исследования является цивилизационная</div>
<div class="t" style="left:350px;top:335px;font-size:15.25px;line-height:21px;color:#1f2430;font-weight:normal;">уникальность гендерных знаков и символов, входящих в</div>
<div class="t" style="left:350px;top:356px;font-size:15.25px;line-height:21px;color:#1f2430;font-weight:normal;">архетипическую ... <span style="color:#3c4a6e">ещё...</span></div>
<div class="abs" style="left:851.0px;top:228.0px;width:31px;height:31px;border-radius:50%;background:#fff;box-shadow:0 0 5px rgba(40,50,90,.08)"></div>
<svg style="left:857.5px;top:234.5px" width="18" height="18"><path d="M8.8 1.8 H6.1 a2.5 2.5 0 0 0 -2.4 2.5 V14.2 a0.8 0.8 0 0 0 1.3 0.6 L8.6 12.1 a1.2 1.2 0 0 1 1.4 0 L13.6 14.8 a0.8 0.8 0 0 0 1.3 -0.6 V9.6" fill="none" stroke="#5a5fd2" stroke-width="1.3"/><circle cx="14.1" cy="4.4" r="3.7" fill="#5a5fd2"/><path d="M14.1 2.4v4M12.1 4.4h4" stroke="#fff" stroke-width="1.2"/></svg>
<svg style="left:350.3px;top:419.8px" width="17" height="17"><path d="M8.5 0.3 L10.7 1.8 L13.3 1.6 L14.2 4.1 L16.6 5.4 L15.9 8.5 L16.6 11.6 L14.2 12.9 L13.3 15.4 L10.7 15.2 L8.5 16.7 L6.3 15.2 L3.7 15.4 L2.8 12.9 L0.4 11.6 L1.1 8.5 L0.4 5.4 L2.8 4.1 L3.7 1.6 L6.3 1.8z" fill="#2f86e0" stroke="#2f86e0" stroke-width="0.8" stroke-linejoin="round"/><path d="M5.2 8.7 l2.3 2.3 4.4-4.6" fill="none" stroke="#fff" stroke-width="1.6"/></svg>
<div class="t" style="left:373px;top:419px;font-size:16.6px;line-height:21px;color:#1b1e2b;font-weight:normal;-webkit-text-stroke:0.4px #1b1e2b">Кринж: между метамодернизмом и постмодернизмом</div>
<div class="t" style="left:350px;top:440px;font-size:16.6px;line-height:21px;color:#1b1e2b;font-weight:normal;-webkit-text-stroke:0.4px #1b1e2b">(2025)</div>
<div class="t" style="left:350px;top:476px;font-size:15.1px;line-height:16px;color:#3c4a6e;font-weight:normal;"><span style="color:#8e99ab">Авторы:</span> Дунилов Иван Михайлович<span style="color:#8e99ab">,</span> Вязигин Николай</div>
<div class="t" style="left:350px;top:492px;font-size:15.1px;line-height:16px;color:#3c4a6e;font-weight:normal;">Дмитриевич</div>
<div class="t" style="left:350px;top:522px;font-size:15.25px;line-height:21px;color:#1f2430;font-weight:normal;">В статье сделана попытка понять причину феномена</div>
<div class="t" style="left:350px;top:543px;font-size:15.25px;line-height:21px;color:#1f2430;font-weight:normal;">популярности понятия «кринж» распространившегося из</div>
<div class="t" style="left:350px;top:564px;font-size:15.25px;line-height:21px;color:#1f2430;font-weight:normal;">молодежного сле... <span style="color:#3c4a6e">ещё...</span></div>
<div class="abs" style="left:851.0px;top:420.0px;width:31px;height:31px;border-radius:50%;background:#fff;box-shadow:0 0 5px rgba(40,50,90,.08)"></div>
<svg style="left:857.5px;top:426.5px" width="18" height="18"><path d="M8.8 1.8 H6.1 a2.5 2.5 0 0 0 -2.4 2.5 V14.2 a0.8 0.8 0 0 0 1.3 0.6 L8.6 12.1 a1.2 1.2 0 0 1 1.4 0 L13.6 14.8 a0.8 0.8 0 0 0 1.3 -0.6 V9.6" fill="none" stroke="#5a5fd2" stroke-width="1.3"/><circle cx="14.1" cy="4.4" r="3.7" fill="#5a5fd2"/><path d="M14.1 2.4v4M12.1 4.4h4" stroke="#fff" stroke-width="1.2"/></svg>
<svg style="left:350.3px;top:627.8px" width="17" height="17"><path d="M8.5 0.3 L10.7 1.8 L13.3 1.6 L14.2 4.1 L16.6 5.4 L15.9 8.5 L16.6 11.6 L14.2 12.9 L13.3 15.4 L10.7 15.2 L8.5 16.7 L6.3 15.2 L3.7 15.4 L2.8 12.9 L0.4 11.6 L1.1 8.5 L0.4 5.4 L2.8 4.1 L3.7 1.6 L6.3 1.8z" fill="#2f86e0" stroke="#2f86e0" stroke-width="0.8" stroke-linejoin="round"/><path d="M5.2 8.7 l2.3 2.3 4.4-4.6" fill="none" stroke="#fff" stroke-width="1.6"/></svg>
<div class="t" style="left:373px;top:627px;font-size:16.6px;line-height:21px;color:#1b1e2b;font-weight:normal;-webkit-text-stroke:0.4px #1b1e2b">Сравнительный анализ паблик-арта Китая и России (2025)</div>
<div class="t" style="left:350px;top:663px;font-size:15.1px;line-height:16px;color:#3c4a6e;font-weight:normal;"><span style="color:#8e99ab">Авторы:</span> Ван Сюйгуан</div>
<div class="t" style="left:350px;top:693px;font-size:15.25px;line-height:21px;color:#1f2430;font-weight:normal;">Искусство уличных пространств становится все более</div>
<div class="t" style="left:350px;top:714px;font-size:15.25px;line-height:21px;color:#1f2430;font-weight:normal;">актуальным и популярным в современном мире. В данной статье</div>
<div class="abs" style="left:851.0px;top:628.0px;width:31px;height:31px;border-radius:50%;background:#fff;box-shadow:0 0 5px rgba(40,50,90,.08)"></div>
<svg style="left:857.5px;top:634.5px" width="18" height="18"><path d="M8.8 1.8 H6.1 a2.5 2.5 0 0 0 -2.4 2.5 V14.2 a0.8 0.8 0 0 0 1.3 0.6 L8.6 12.1 a1.2 1.2 0 0 1 1.4 0 L13.6 14.8 a0.8 0.8 0 0 0 1.3 -0.6 V9.6" fill="none" stroke="#5a5fd2" stroke-width="1.3"/><circle cx="14.1" cy="4.4" r="3.7" fill="#5a5fd2"/><path d="M14.1 2.4v4M12.1 4.4h4" stroke="#fff" stroke-width="1.2"/></svg>
<div class="abs" style="left:913px;top:62px;width:273px;height:219px;border-radius:12px;background:#fff"></div>
<div class="abs" style="left:913px;top:172px;width:272px;height:44px;background:#f4f6fa;border-left:2px solid #0d1a3a"></div>
<div class="t" style="left:966px;top:92.5px;font-size:16.2px;line-height:20px;color:#303236;font-weight:normal;">Журнал</div>
<div class="t" style="left:967px;top:137.5px;font-size:16.2px;line-height:20px;color:#303236;font-weight:normal;">Авторы</div>
<div class="t" style="left:963px;top:182.5px;font-size:16.4px;line-height:20px;color:#16181d;font-weight:normal;">Архив выпусков</div>
<div class="t" style="left:960px;top:226.5px;font-size:16.2px;line-height:20px;color:#3a3c40;font-weight:normal;">Архив статей</div>
<div class="abs" style="left:1144px;top:185px;width:21px;height:16px;border-radius:8px;background:#8c94a8;color:#fff;font-size:11px;font-weight:bold;text-align:center;line-height:16px">7</div>
<div class="abs" style="left:1138px;top:230px;width:27px;height:16px;border-radius:8px;background:#8c94a8;color:#fff;font-size:11px;font-weight:bold;text-align:center;line-height:16px">80</div>
<svg style="left:0;top:0" width="1223" height="300">
<g transform="translate(-8 8.5)"><path d="M943.5 96 L951.5 89.5 L959.5 96 L958 97.5 L957 96.7 V103 H953.5 V99.5 H949.5 V103 H946 V96.7 L945 97.5z" fill="#222"/>
<path d="M955 90.5 h2 v3 l-2-1.6z" fill="#222"/></g>
<g transform="translate(0 2.3)"><circle cx="940" cy="143" r="3.2" fill="#222"/><path d="M934.5 152 a5.5 5 0 0 1 11 0z" fill="#222"/>
<circle cx="948.5" cy="143.8" r="2.6" fill="#222"/><path d="M944.5 152 a4.5 4.5 0 0 1 9 0z" fill="#222"/></g>
<g fill="#222"><rect x="936.5" y="187.6" width="3.3" height="3.3"/><rect x="940.8" y="187.6" width="3.3" height="3.3"/><rect x="945.1" y="187.6" width="3.3" height="3.3"/><rect x="936.5" y="191.9" width="3.3" height="3.3"/><rect x="940.8" y="191.9" width="3.3" height="3.3"/><rect x="945.1" y="191.9" width="3.3" height="3.3"/><rect x="936.5" y="196.2" width="3.3" height="3.3"/><rect x="940.8" y="196.2" width="3.3" height="3.3"/><rect x="945.1" y="196.2" width="3.3" height="3.3"/></g>
<path d="M936 231 h6 l4 4 v11 h-10z" fill="#222"/><path d="M938 238h6M938 240.5h6M938 243h6" stroke="#fff" stroke-width=".9"/>
</svg>
<div class="abs" style="left:913px;top:291px;width:273px;height:88px;border-radius:12px;background:#fff"></div>
<div class="t" style="left:995px;top:314px;font-size:10.9px;line-height:14px;color:#8a93a5">Наведите камеру на QR-код,<br>чтобы открыть моб. версию<br>страницы.</div>
<svg style="left:933px;top:311px" width="48" height="48"><g fill="#111"><rect x="0.00" y="0.00" width="1.71" height="1.71"/><rect x="1.66" y="0.00" width="1.71" height="1.71"/><rect x="3.31" y="0.00" width="1.71" height="1.71"/><rect x="4.97" y="0.00" width="1.71" height="1.71"/><rect x="6.62" y="0.00" width="1.71" height="1.71"/><rect x="8.28" y="0.00" width="1.71" height="1.71"/><rect x="9.93" y="0.00" width="1.71" height="1.71"/><rect x="13.24" y="0.00" width="1.71" height="1.71"/><rect x="14.90" y="0.00" width="1.71" height="1.71"/><rect x="16.55" y="0.00" width="1.71" height="1.71"/><rect x="18.21" y="0.00" width="1.71" height="1.71"/><rect x="19.86" y="0.00" width="1.71" height="1.71"/><rect x="23.17" y="0.00" width="1.71" height="1.71"/><rect x="24.83" y="0.00" width="1.71" height="1.71"/><rect x="31.45" y="0.00" width="1.71" height="1.71"/><rect x="36.41" y="0.00" width="1.71" height="1.71"/><rect x="38.07" y="0.00" width="1.71" height="1.71"/><rect x="39.72" y="0.00" width="1.71" height="1.71"/><rect x="41.38" y="0.00" width="1.71" height="1.71"/><rect x="43.03" y="0.00" width="1.71" height="1.71"/><rect x="44.69" y="0.00" width="1.71" height="1.71"/><rect x="46.34" y="0.00" width="1.71" height="1.71"/><rect x="0.00" y="1.66" width="1.71" height="1.71"/><rect x="9.93" y="1.66" width="1.71" height="1.71"/><rect x="13.24" y="1.66" width="1.71" height="1.71"/><rect x="14.90" y="1.66" width="1.71" height="1.71"/><rect x="18.21" y="1.66" width="1.71" height="1.71"/><rect x="19.86" y="1.66" width="1.71" height="1.71"/><rect x="24.83" y="1.66" width="1.71" height="1.71"/><rect x="33.10" y="1.66" width="1.71" height="1.71"/><rect x="36.41" y="1.66" width="1.71" height="1.71"/><rect x="46.34" y="1.66" width="1.71" height="1.71"/><rect x="0.00" y="3.31" width="1.71" height="1.71"/><rect x="3.31" y="3.31" width="1.71" height="1.71"/><rect x="4.97" y="3.31" width="1.71" height="1.71"/><rect x="6.62" y="3.31" width="1.71" height="1.71"/><rect x="9.93" y="3.31" width="1.71" height="1.71"/><rect x="16.55" y="3.31" width="1.71" height="1.71"/><rect x="19.86" y="3.31" width="1.71" height="1.71"/><rect x="28.14" y="3.31" width="1.71" height="1.71"/><rect x="29.79" y="3.31" width="1.71" height="1.71"/><rect x="33.10" y="3.31" width="1.71" height="1.71"/><rect x="36.41" y="3.31" width="1.71" height="1.71"/><rect x="39.72" y="3.31" width="1.71" height="1.71"/><rect x="41.38" y="3.31" width="1.71" height="1.71"/><rect x="43.03" y="3.31" width="1.71" height="1.71"/><rect x="46.34" y="3.31" width="1.71" height="1.71"/><rect x="0.00" y="4.97" width="1.71" height="1.71"/><rect x="3.31" y="4.97" width="1.71" height="1.71"/><rect x="4.97" y="4.97" width="1.71" height="1.71"/><rect x="6.62" y="4.97" width="1.71" height="1.71"/><rect x="9.93" y="4.97" width="1.71" height="1.71"/><rect x="13.24" y="4.97" width="1.71" height="1.71"/><rect x="14.90" y="4.97" width="1.71" height="1.71"/><rect x="19.86" y="4.97" width="1.71" height="1.71"/><rect x="21.52" y="4.97" width="1.71" height="1.71"/><rect x="23.17" y="4.97" width="1.71" height="1.71"/><rect x="24.83" y="4.97" width="1.71" height="1.71"/><rect x="26.48" y="4.97" width="1.71" height="1.71"/><rect x="29.79" y="4.97" width="1.71" height="1.71"/><rect x="31.45" y="4.97" width="1.71" height="1.71"/><rect x="33.10" y="4.97" width="1.71" height="1.71"/><rect x="36.41" y="4.97" width="1.71" height="1.71"/><rect x="39.72" y="4.97" width="1.71" height="1.71"/><rect x="41.38" y="4.97" width="1.71" height="1.71"/><rect x="43.03" y="4.97" width="1.71" height="1.71"/><rect x="46.34" y="4.97" width="1.71" height="1.71"/><rect x="0.00" y="6.62" width="1.71" height="1.71"/><rect x="3.31" y="6.62" width="1.71" height="1.71"/><rect x="4.97" y="6.62" width="1.71" height="1.71"/><rect x="6.62" y="6.62" width="1.71" height="1.71"/><rect x="9.93" y="6.62" width="1.71" height="1.71"/><rect x="13.24" y="6.62" width="1.71" height="1.71"/><rect x="14.90" y="6.62" width="1.71" height="1.71"/><rect x="16.55" y="6.62" width="1.71" height="1.71"/><rect x="18.21" y="6.62" width="1.71" height="1.71"/><rect x="19.86" y="6.62" width="1.71" height="1.71"/><rect x="21.52" y="6.62" width="1.71" height="1.71"/><rect x="23.17" y="6.62" width="1.71" height="1.71"/><rect x="24.83" y="6.62" width="1.71" height="1.71"/><rect x="26.48" y="6.62" width="1.71" height="1.71"/><rect x="28.14" y="6.62" width="1.71" height="1.71"/><rect x="29.79" y="6.62" width="1.71" height="1.71"/><rect x="36.41" y="6.62" width="1.71" height="1.71"/><rect x="39.72" y="6.62" width="1.71" height="1.71"/><rect x="41.38" y="6.62" width="1.71" height="1.71"/><rect x="43.03" y="6.62" width="1.71" height="1.71"/><rect x="46.34" y="6.62" width="1.71" height="1.71"/><rect x="0.00" y="8.28" width="1.71" height="1.71"/><rect x="9.93" y="8.28" width="1.71" height="1.71"/><rect x="16.55" y="8.28" width="1.71" height="1.71"/><rect x="19.86" y="8.28" width="1.71" height="1.71"/><rect x="28.14" y="8.28" width="1.71" height="1.71"/><rect x="29.79" y="8.28" width="1.71" height="1.71"/><rect x="31.45" y="8.28" width="1.71" height="1.71"/><rect x="36.41" y="8.28" width="1.71" height="1.71"/><rect x="46.34" y="8.28" width="1.71" height="1.71"/><rect x="0.00" y="9.93" width="1.71" height="1.71"/><rect x="1.66" y="9.93" width="1.71" height="1.71"/><rect x="3.31" y="9.93" width="1.71" height="1.71"/><rect x="4.97" y="9.93" width="1.71" height="1.71"/><rect x="6.62" y="9.93" width="1.71" height="1.71"/><rect x="8.28" y="9.93" width="1.71" height="1.71"/><rect x="9.93" y="9.93" width="1.71" height="1.71"/><rect x="13.24" y="9.93" width="1.71" height="1.71"/><rect x="16.55" y="9.93" width="1.71" height="1.71"/><rect x="19.86" y="9.93" width="1.71" height="1.71"/><rect x="23.17" y="9.93" width="1.71" height="1.71"/><rect x="26.48" y="9.93" width="1.71" height="1.71"/><rect x="29.79" y="9.93" width="1.71" height="1.71"/><rect x="33.10" y="9.93" width="1.71" height="1.71"/><rect x="36.41" y="9.93" width="1.71" height="1.71"/><rect x="38.07" y="9.93" width="1.71" height="1.71"/><rect x="39.72" y="9.93" width="1.71" height="1.71"/><rect x="41.38" y="9.93" width="1.71" height="1.71"/><rect x="43.03" y="9.93" width="1.71" height="1.71"/><rect x="44.69" y="9.93" width="1.71" height="1.71"/><rect x="46.34" y="9.93" width="1.71" height="1.71"/><rect x="13.24" y="11.59" width="1.71" height="1.71"/><rect x="14.90" y="11.59" width="1.71" height="1.71"/><rect x="19.86" y="11.59" width="1.71" height="1.71"/><rect x="21.52" y="11.59" width="1.71" height="1.71"/><rect x="23.17" y="11.59" width="1.71" height="1.71"/><rect x="28.14" y="11.59" width="1.71" height="1.71"/><rect x="0.00" y="13.24" width="1.71" height="1.71"/><rect x="4.97" y="13.24" width="1.71" height="1.71"/><rect x="6.62" y="13.24" width="1.71" height="1.71"/><rect x="8.28" y="13.24" width="1.71" height="1.71"/><rect x="9.93" y="13.24" width="1.71" height="1.71"/><rect x="13.24" y="13.24" width="1.71" height="1.71"/><rect x="14.90" y="13.24" width="1.71" height="1.71"/><rect x="16.55" y="13.24" width="1.71" height="1.71"/><rect x="19.86" y="13.24" width="1.71" height="1.71"/><rect x="21.52" y="13.24" width="1.71" height="1.71"/><rect x="26.48" y="13.24" width="1.71" height="1.71"/><rect x="34.76" y="13.24" width="1.71" height="1.71"/><rect x="36.41" y="13.24" width="1.71" height="1.71"/><rect x="38.07" y="13.24" width="1.71" height="1.71"/><rect x="39.72" y="13.24" width="1.71" height="1.71"/><rect x="43.03" y="13.24" width="1.71" height="1.71"/><rect x="44.69" y="13.24" width="1.71" height="1.71"/><rect x="1.66" y="14.90" width="1.71" height="1.71"/><rect x="8.28" y="14.90" width="1.71" height="1.71"/><rect x="11.59" y="14.90" width="1.71" height="1.71"/><rect x="13.24" y="14.90" width="1.71" height="1.71"/><rect x="23.17" y="14.90" width="1.71" height="1.71"/><rect x="31.45" y="14.90" width="1.71" height="1.71"/><rect x="34.76" y="14.90" width="1.71" height="1.71"/><rect x="43.03" y="14.90" width="1.71" height="1.71"/><rect x="1.66" y="16.55" width="1.71" height="1.71"/><rect x="3.31" y="16.55" width="1.71" height="1.71"/><rect x="4.97" y="16.55" width="1.71" height="1.71"/><rect x="6.62" y="16.55" width="1.71" height="1.71"/><rect x="8.28" y="16.55" width="1.71" height="1.71"/><rect x="9.93" y="16.55" width="1.71" height="1.71"/><rect x="16.55" y="16.55" width="1.71" height="1.71"/><rect x="21.52" y="16.55" width="1.71" height="1.71"/><rect x="26.48" y="16.55" width="1.71" height="1.71"/><rect x="29.79" y="16.55" width="1.71" height="1.71"/><rect x="31.45" y="16.55" width="1.71" height="1.71"/><rect x="36.41" y="16.55" width="1.71" height="1.71"/><rect x="38.07" y="16.55" width="1.71" height="1.71"/><rect x="41.38" y="16.55" width="1.71" height="1.71"/><rect x="43.03" y="16.55" width="1.71" height="1.71"/><rect x="44.69" y="16.55" width="1.71" height="1.71"/><rect x="0.00" y="18.21" width="1.71" height="1.71"/><rect x="3.31" y="18.21" width="1.71" height="1.71"/><rect x="4.97" y="18.21" width="1.71" height="1.71"/><rect x="6.62" y="18.21" width="1.71" height="1.71"/><rect x="11.59" y="18.21" width="1.71" height="1.71"/><rect x="18.21" y="18.21" width="1.71" height="1.71"/><rect x="19.86" y="18.21" width="1.71" height="1.71"/><rect x="21.52" y="18.21" width="1.71" height="1.71"/><rect x="24.83" y="18.21" width="1.71" height="1.71"/><rect x="26.48" y="18.21" width="1.71" height="1.71"/><rect x="28.14" y="18.21" width="1.71" height="1.71"/><rect x="33.10" y="18.21" width="1.71" height="1.71"/><rect x="34.76" y="18.21" width="1.71" height="1.71"/><rect x="41.38" y="18.21" width="1.71" height="1.71"/><rect x="43.03" y="18.21" width="1.71" height="1.71"/><rect x="46.34" y="18.21" width="1.71" height="1.71"/><rect x="0.00" y="19.86" width="1.71" height="1.71"/><rect x="6.62" y="19.86" width="1.71" height="1.71"/><rect x="9.93" y="19.86" width="1.71" height="1.71"/><rect x="13.24" y="19.86" width="1.71" height="1.71"/><rect x="14.90" y="19.86" width="1.71" height="1.71"/><rect x="19.86" y="19.86" width="1.71" height="1.71"/><rect x="21.52" y="19.86" width="1.71" height="1.71"/><rect x="24.83" y="19.86" width="1.71" height="1.71"/><rect x="26.48" y="19.86" width="1.71" height="1.71"/><rect x="28.14" y="19.86" width="1.71" height="1.71"/><rect x="29.79" y="19.86" width="1.71" height="1.71"/><rect x="31.45" y="19.86" width="1.71" height="1.71"/><rect x="33.10" y="19.86" width="1.71" height="1.71"/><rect x="34.76" y="19.86" width="1.71" height="1.71"/><rect x="38.07" y="19.86" width="1.71" height="1.71"/><rect x="41.38" y="19.86" width="1.71" height="1.71"/><rect x="43.03" y="19.86" width="1.71" height="1.71"/><rect x="44.69" y="19.86" width="1.71" height="1.71"/><rect x="46.34" y="19.86" width="1.71" height="1.71"/><rect x="0.00" y="21.52" width="1.71" height="1.71"/><rect x="4.97" y="21.52" width="1.71" height="1.71"/><rect x="6.62" y="21.52" width="1.71" height="1.71"/><rect x="13.24" y="21.52" width="1.71" height="1.71"/><rect x="14.90" y="21.52" width="1.71" height="1.71"/><rect x="18.21" y="21.52" width="1.71" height="1.71"/><rect x="24.83" y="21.52" width="1.71" height="1.71"/><rect x="31.45" y="21.52" width="1.71" height="1.71"/><rect x="33.10" y="21.52" width="1.71" height="1.71"/><rect x="34.76" y="21.52" width="1.71" height="1.71"/><rect x="36.41" y="21.52" width="1.71" height="1.71"/><rect x="38.07" y="21.52" width="1.71" height="1.71"/><rect x="41.38" y="21.52" width="1.71" height="1.71"/><rect x="43.03" y="21.52" width="1.71" height="1.71"/><rect x="44.69" y="21.52" width="1.71" height="1.71"/><rect x="3.31" y="23.17" width="1.71" height="1.71"/><rect x="4.97" y="23.17" width="1.71" height="1.71"/><rect x="6.62" y="23.17" width="1.71" height="1.71"/><rect x="8.28" y="23.17" width="1.71" height="1.71"/><rect x="9.93" y="23.17" width="1.71" height="1.71"/><rect x="11.59" y="23.17" width="1.71" height="1.71"/><rect x="13.24" y="23.17" width="1.71" height="1.71"/><rect x="19.86" y="23.17" width="1.71" height="1.71"/><rect x="23.17" y="23.17" width="1.71" height="1.71"/><rect x="24.83" y="23.17" width="1.71" height="1.71"/><rect x="26.48" y="23.17" width="1.71" height="1.71"/><rect x="28.14" y="23.17" width="1.71" height="1.71"/><rect x="29.79" y="23.17" width="1.71" height="1.71"/><rect x="33.10" y="23.17" width="1.71" height="1.71"/><rect x="36.41" y="23.17" width="1.71" height="1.71"/><rect x="38.07" y="23.17" width="1.71" height="1.71"/><rect x="39.72" y="23.17" width="1.71" height="1.71"/><rect x="41.38" y="23.17" width="1.71" height="1.71"/><rect x="43.03" y="23.17" width="1.71" height="1.71"/><rect x="44.69" y="23.17" width="1.71" height="1.71"/><rect x="46.34" y="23.17" width="1.71" height="1.71"/><rect x="0.00" y="24.83" width="1.71" height="1.71"/><rect x="11.59" y="24.83" width="1.71" height="1.71"/><rect x="13.24" y="24.83" width="1.71" height="1.71"/><rect x="16.55" y="24.83" width="1.71" height="1.71"/><rect x="21.52" y="24.83" width="1.71" height="1.71"/><rect x="31.45" y="24.83" width="1.71" height="1.71"/><rect x="0.00" y="26.48" width="1.71" height="1.71"/><rect x="1.66" y="26.48" width="1.71" height="1.71"/><rect x="3.31" y="26.48" width="1.71" height="1.71"/><rect x="4.97" y="26.48" width="1.71" height="1.71"/><rect x="6.62" y="26.48" width="1.71" height="1.71"/><rect x="9.93" y="26.48" width="1.71" height="1.71"/><rect x="16.55" y="26.48" width="1.71" height="1.71"/><rect x="18.21" y="26.48" width="1.71" height="1.71"/><rect x="28.14" y="26.48" width="1.71" height="1.71"/><rect x="31.45" y="26.48" width="1.71" height="1.71"/><rect x="33.10" y="26.48" width="1.71" height="1.71"/><rect x="34.76" y="26.48" width="1.71" height="1.71"/><rect x="38.07" y="26.48" width="1.71" height="1.71"/><rect x="43.03" y="26.48" width="1.71" height="1.71"/><rect x="44.69" y="26.48" width="1.71" height="1.71"/><rect x="46.34" y="26.48" width="1.71" height="1.71"/><rect x="6.62" y="28.14" width="1.71" height="1.71"/><rect x="8.28" y="28.14" width="1.71" height="1.71"/><rect x="13.24" y="28.14" width="1.71" height="1.71"/><rect x="16.55" y="28.14" width="1.71" height="1.71"/><rect x="18.21" y="28.14" width="1.71" height="1.71"/><rect x="19.86" y="28.14" width="1.71" height="1.71"/><rect x="26.48" y="28.14" width="1.71" height="1.71"/><rect x="29.79" y="28.14" width="1.71" height="1.71"/><rect x="31.45" y="28.14" width="1.71" height="1.71"/><rect x="33.10" y="28.14" width="1.71" height="1.71"/><rect x="36.41" y="28.14" width="1.71" height="1.71"/><rect x="41.38" y="28.14" width="1.71" height="1.71"/><rect x="43.03" y="28.14" width="1.71" height="1.71"/><rect x="0.00" y="29.79" width="1.71" height="1.71"/><rect x="1.66" y="29.79" width="1.71" height="1.71"/><rect x="3.31" y="29.79" width="1.71" height="1.71"/><rect x="6.62" y="29.79" width="1.71" height="1.71"/><rect x="9.93" y="29.79" width="1.71" height="1.71"/><rect x="14.90" y="29.79" width="1.71" height="1.71"/><rect x="23.17" y="29.79" width="1.71" height="1.71"/><rect x="26.48" y="29.79" width="1.71" height="1.71"/><rect x="28.14" y="29.79" width="1.71" height="1.71"/><rect x="29.79" y="29.79" width="1.71" height="1.71"/><rect x="31.45" y="29.79" width="1.71" height="1.71"/><rect x="33.10" y="29.79" width="1.71" height="1.71"/><rect x="34.76" y="29.79" width="1.71" height="1.71"/><rect x="36.41" y="29.79" width="1.71" height="1.71"/><rect x="38.07" y="29.79" width="1.71" height="1.71"/><rect x="39.72" y="29.79" width="1.71" height="1.71"/><rect x="43.03" y="29.79" width="1.71" height="1.71"/><rect x="0.00" y="31.45" width="1.71" height="1.71"/><rect x="6.62" y="31.45" width="1.71" height="1.71"/><rect x="8.28" y="31.45" width="1.71" height="1.71"/><rect x="14.90" y="31.45" width="1.71" height="1.71"/><rect x="16.55" y="31.45" width="1.71" height="1.71"/><rect x="18.21" y="31.45" width="1.71" height="1.71"/><rect x="19.86" y="31.45" width="1.71" height="1.71"/><rect x="21.52" y="31.45" width="1.71" height="1.71"/><rect x="24.83" y="31.45" width="1.71" height="1.71"/><rect x="28.14" y="31.45" width="1.71" height="1.71"/><rect x="29.79" y="31.45" width="1.71" height="1.71"/><rect x="33.10" y="31.45" width="1.71" height="1.71"/><rect x="34.76" y="31.45" width="1.71" height="1.71"/><rect x="1.66" y="33.10" width="1.71" height="1.71"/><rect x="4.97" y="33.10" width="1.71" height="1.71"/><rect x="9.93" y="33.10" width="1.71" height="1.71"/><rect x="11.59" y="33.10" width="1.71" height="1.71"/><rect x="14.90" y="33.10" width="1.71" height="1.71"/><rect x="16.55" y="33.10" width="1.71" height="1.71"/><rect x="18.21" y="33.10" width="1.71" height="1.71"/><rect x="19.86" y="33.10" width="1.71" height="1.71"/><rect x="24.83" y="33.10" width="1.71" height="1.71"/><rect x="28.14" y="33.10" width="1.71" height="1.71"/><rect x="31.45" y="33.10" width="1.71" height="1.71"/><rect x="33.10" y="33.10" width="1.71" height="1.71"/><rect x="34.76" y="33.10" width="1.71" height="1.71"/><rect x="36.41" y="33.10" width="1.71" height="1.71"/><rect x="38.07" y="33.10" width="1.71" height="1.71"/><rect x="39.72" y="33.10" width="1.71" height="1.71"/><rect x="41.38" y="33.10" width="1.71" height="1.71"/><rect x="46.34" y="33.10" width="1.71" height="1.71"/><rect x="16.55" y="34.76" width="1.71" height="1.71"/><rect x="18.21" y="34.76" width="1.71" height="1.71"/><rect x="21.52" y="34.76" width="1.71" height="1.71"/><rect x="23.17" y="34.76" width="1.71" height="1.71"/><rect x="24.83" y="34.76" width="1.71" height="1.71"/><rect x="26.48" y="34.76" width="1.71" height="1.71"/><rect x="29.79" y="34.76" width="1.71" height="1.71"/><rect x="33.10" y="34.76" width="1.71" height="1.71"/><rect x="39.72" y="34.76" width="1.71" height="1.71"/><rect x="41.38" y="34.76" width="1.71" height="1.71"/><rect x="43.03" y="34.76" width="1.71" height="1.71"/><rect x="0.00" y="36.41" width="1.71" height="1.71"/><rect x="1.66" y="36.41" width="1.71" height="1.71"/><rect x="3.31" y="36.41" width="1.71" height="1.71"/><rect x="4.97" y="36.41" width="1.71" height="1.71"/><rect x="6.62" y="36.41" width="1.71" height="1.71"/><rect x="8.28" y="36.41" width="1.71" height="1.71"/><rect x="9.93" y="36.41" width="1.71" height="1.71"/><rect x="13.24" y="36.41" width="1.71" height="1.71"/><rect x="21.52" y="36.41" width="1.71" height="1.71"/><rect x="23.17" y="36.41" width="1.71" height="1.71"/><rect x="24.83" y="36.41" width="1.71" height="1.71"/><rect x="33.10" y="36.41" width="1.71" height="1.71"/><rect x="36.41" y="36.41" width="1.71" height="1.71"/><rect x="39.72" y="36.41" width="1.71" height="1.71"/><rect x="43.03" y="36.41" width="1.71" height="1.71"/><rect x="0.00" y="38.07" width="1.71" height="1.71"/><rect x="9.93" y="38.07" width="1.71" height="1.71"/><rect x="14.90" y="38.07" width="1.71" height="1.71"/><rect x="16.55" y="38.07" width="1.71" height="1.71"/><rect x="19.86" y="38.07" width="1.71" height="1.71"/><rect x="21.52" y="38.07" width="1.71" height="1.71"/><rect x="23.17" y="38.07" width="1.71" height="1.71"/><rect x="29.79" y="38.07" width="1.71" height="1.71"/><rect x="31.45" y="38.07" width="1.71" height="1.71"/><rect x="33.10" y="38.07" width="1.71" height="1.71"/><rect x="39.72" y="38.07" width="1.71" height="1.71"/><rect x="41.38" y="38.07" width="1.71" height="1.71"/><rect x="44.69" y="38.07" width="1.71" height="1.71"/><rect x="46.34" y="38.07" width="1.71" height="1.71"/><rect x="0.00" y="39.72" width="1.71" height="1.71"/><rect x="3.31" y="39.72" width="1.71" height="1.71"/><rect x="4.97" y="39.72" width="1.71" height="1.71"/><rect x="6.62" y="39.72" width="1.71" height="1.71"/><rect x="9.93" y="39.72" width="1.71" height="1.71"/><rect x="18.21" y="39.72" width="1.71" height="1.71"/><rect x="21.52" y="39.72" width="1.71" height="1.71"/><rect x="24.83" y="39.72" width="1.71" height="1.71"/><rect x="26.48" y="39.72" width="1.71" height="1.71"/><rect x="29.79" y="39.72" width="1.71" height="1.71"/><rect x="33.10" y="39.72" width="1.71" height="1.71"/><rect x="34.76" y="39.72" width="1.71" height="1.71"/><rect x="36.41" y="39.72" width="1.71" height="1.71"/><rect x="38.07" y="39.72" width="1.71" height="1.71"/><rect x="39.72" y="39.72" width="1.71" height="1.71"/><rect x="43.03" y="39.72" width="1.71" height="1.71"/><rect x="44.69" y="39.72" width="1.71" height="1.71"/><rect x="46.34" y="39.72" width="1.71" height="1.71"/><rect x="0.00" y="41.38" width="1.71" height="1.71"/><rect x="3.31" y="41.38" width="1.71" height="1.71"/><rect x="4.97" y="41.38" width="1.71" height="1.71"/><rect x="6.62" y="41.38" width="1.71" height="1.71"/><rect x="9.93" y="41.38" width="1.71" height="1.71"/><rect x="16.55" y="41.38" width="1.71" height="1.71"/><rect x="18.21" y="41.38" width="1.71" height="1.71"/><rect x="23.17" y="41.38" width="1.71" height="1.71"/><rect x="26.48" y="41.38" width="1.71" height="1.71"/><rect x="28.14" y="41.38" width="1.71" height="1.71"/><rect x="29.79" y="41.38" width="1.71" height="1.71"/><rect x="31.45" y="41.38" width="1.71" height="1.71"/><rect x="33.10" y="41.38" width="1.71" height="1.71"/><rect x="34.76" y="41.38" width="1.71" height="1.71"/><rect x="36.41" y="41.38" width="1.71" height="1.71"/><rect x="39.72" y="41.38" width="1.71" height="1.71"/><rect x="43.03" y="41.38" width="1.71" height="1.71"/><rect x="44.69" y="41.38" width="1.71" height="1.71"/><rect x="0.00" y="43.03" width="1.71" height="1.71"/><rect x="3.31" y="43.03" width="1.71" height="1.71"/><rect x="4.97" y="43.03" width="1.71" height="1.71"/><rect x="6.62" y="43.03" width="1.71" height="1.71"/><rect x="9.93" y="43.03" width="1.71" height="1.71"/><rect x="14.90" y="43.03" width="1.71" height="1.71"/><rect x="16.55" y="43.03" width="1.71" height="1.71"/><rect x="21.52" y="43.03" width="1.71" height="1.71"/><rect x="23.17" y="43.03" width="1.71" height="1.71"/><rect x="24.83" y="43.03" width="1.71" height="1.71"/><rect x="28.14" y="43.03" width="1.71" height="1.71"/><rect x="33.10" y="43.03" width="1.71" height="1.71"/><rect x="34.76" y="43.03" width="1.71" height="1.71"/><rect x="39.72" y="43.03" width="1.71" height="1.71"/><rect x="43.03" y="43.03" width="1.71" height="1.71"/><rect x="44.69" y="43.03" width="1.71" height="1.71"/><rect x="46.34" y="43.03" width="1.71" height="1.71"/><rect x="0.00" y="44.69" width="1.71" height="1.71"/><rect x="9.93" y="44.69" width="1.71" height="1.71"/><rect x="14.90" y="44.69" width="1.71" height="1.71"/><rect x="16.55" y="44.69" width="1.71" height="1.71"/><rect x="18.21" y="44.69" width="1.71" height="1.71"/><rect x="19.86" y="44.69" width="1.71" height="1.71"/><rect x="23.17" y="44.69" width="1.71" height="1.71"/><rect x="33.10" y="44.69" width="1.71" height="1.71"/><rect x="34.76" y="44.69" width="1.71" height="1.71"/><rect x="36.41" y="44.69" width="1.71" height="1.71"/><rect x="39.72" y="44.69" width="1.71" height="1.71"/><rect x="41.38" y="44.69" width="1.71" height="1.71"/><rect x="44.69" y="44.69" width="1.71" height="1.71"/><rect x="46.34" y="44.69" width="1.71" height="1.71"/><rect x="0.00" y="46.34" width="1.71" height="1.71"/><rect x="1.66" y="46.34" width="1.71" height="1.71"/><rect x="3.31" y="46.34" width="1.71" height="1.71"/><rect x="4.97" y="46.34" width="1.71" height="1.71"/><rect x="6.62" y="46.34" width="1.71" height="1.71"/><rect x="8.28" y="46.34" width="1.71" height="1.71"/><rect x="9.93" y="46.34" width="1.71" height="1.71"/><rect x="13.24" y="46.34" width="1.71" height="1.71"/><rect x="14.90" y="46.34" width="1.71" height="1.71"/><rect x="18.21" y="46.34" width="1.71" height="1.71"/><rect x="19.86" y="46.34" width="1.71" height="1.71"/><rect x="21.52" y="46.34" width="1.71" height="1.71"/><rect x="31.45" y="46.34" width="1.71" height="1.71"/><rect x="34.76" y="46.34" width="1.71" height="1.71"/><rect x="38.07" y="46.34" width="1.71" height="1.71"/><rect x="41.38" y="46.34" width="1.71" height="1.71"/><rect x="43.03" y="46.34" width="1.71" height="1.71"/><rect x="44.69" y="46.34" width="1.71" height="1.71"/><rect x="46.34" y="46.34" width="1.71" height="1.71"/></g></svg>
<div class="abs" style="left:1221px;top:0px;width:2px;height:724px;background:#f6f6f7"></div>
<div class="abs" style="left:1221px;top:226px;width:2px;height:182px;background:#7b7b7b"></div>
</div>
<div id="taskbar"></div>
</body></html>
